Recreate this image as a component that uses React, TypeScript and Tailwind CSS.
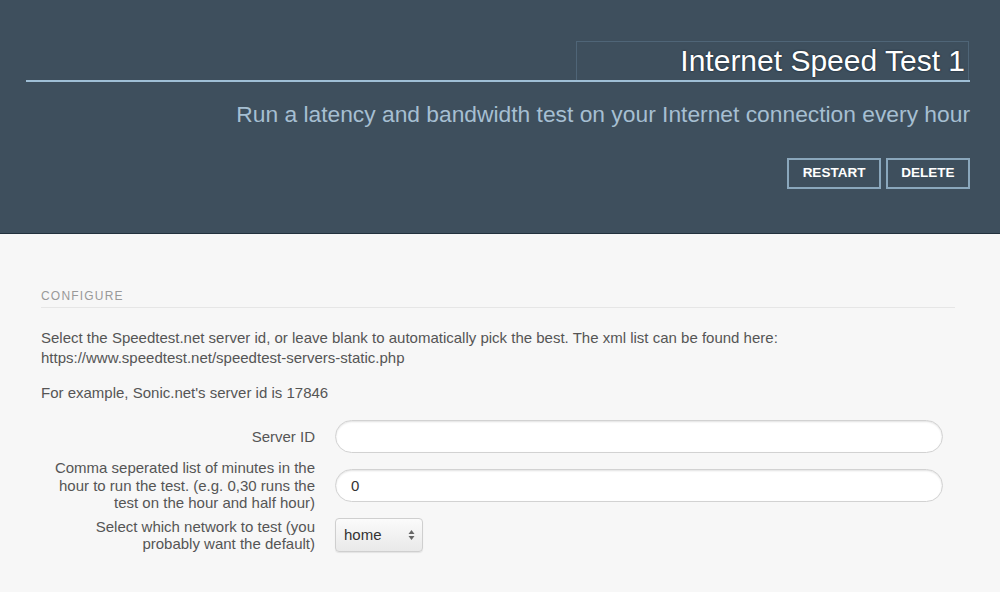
import React from 'react';

function FormRow({ label, children }: { label: React.ReactNode; children: React.ReactNode }) {
  return (
    <div className="flex items-center">
      <label className="w-[274px] shrink-0 text-right text-[15px] leading-[17.5px] text-[#555]">{label}</label>
      <div className="ml-[20px] flex-1">{children}</div>
    </div>
  );
}

const inputCls =
  'h-[33px] w-full rounded-full border border-[#d2d2d2] bg-white px-[15px] text-[15px] text-[#333] shadow-[inset_0_1px_2px_rgba(0,0,0,0.12)] outline-none';

export default function App() {
  return (
    <div className="min-h-[592px] bg-[#f7f7f7] font-['Liberation_Sans',Arial,sans-serif]">
      <header className="h-[234px] border-b border-[#22313d] bg-[#3e4f5d] pl-[26px] pr-[30px] pt-[41px]">
        <div className="flex justify-end border-b-[2px] border-[#9fbfd6]">
          <h1 className="mr-[1px] w-[393px] border border-b-0 border-[#4f6577] pr-[3px] text-right text-[30px] leading-[38px] text-white [text-shadow:0_0_2px_#0c1a26]">
            Internet Speed Test 1
          </h1>
        </div>
        <p className="mt-[18px] text-right text-[22.8px] leading-[28px] text-[#a6bfd2]">
          Run a latency and bandwidth test on your Internet connection every hour
        </p>
        <div className="mt-[30px] flex justify-end gap-[5px]">
          <button className="h-[31px] w-[94px] border-[2px] border-[#8aa7bc] text-[13.5px] font-bold text-white">RESTART</button>
          <button className="h-[31px] w-[84px] border-[2px] border-[#8aa7bc] text-[13.5px] font-bold text-white">DELETE</button>
        </div>
      </header>

      <main className="pl-[41px] pr-[45px] pt-[53px]">
        <h2 className="border-b border-[#e6e6e6] pb-[2px] text-[12px] tracking-[1.2px] text-[#999]">CONFIGURE</h2>
        <p className="mt-[20px] text-[15px] leading-[20px] text-[#555]">
          Select the Speedtest.net server id, or leave blank to automatically pick the best. The xml list can be found here:
          <br />
          https://www.speedtest.net/speedtest-servers-static.php
        </p>
        <p className="mt-[15px] text-[15px] leading-[20px] text-[#555]">For example, Sonic.net's server id is 17846</p>

        <div className="mt-[17px] mr-[12px] flex flex-col gap-[6px]">
          <FormRow label="Server ID">
            <input className={inputCls} />
          </FormRow>
          <FormRow
            label={
              <>
                Comma seperated list of minutes in the
                <br />
                hour to run the test. (e.g. 0,30 runs the
                <br />
                test on the hour and half hour)
              </>
            }
          >
            <input defaultValue="0" className={inputCls} />
          </FormRow>
          <FormRow
            label={
              <>
                Select which network to test (you
                <br />
                probably want the default)
              </>
            }
          >
            <div className="relative flex h-[34px] w-[88px] items-center rounded-[4px] border border-[#cfcfcf] bg-gradient-to-b from-[#fbfbfb] to-[#e9e9e9] px-[8px] text-[15px] text-[#333] shadow-[0_1px_1px_rgba(0,0,0,0.08)]">
              home
              <svg className="absolute right-[7px] top-[10px]" width="7" height="12" viewBox="0 0 7 12">
                <path d="M3.5 1 L6.5 5 H0.5 Z" fill="#666" />
                <path d="M3.5 11 L6.5 7 H0.5 Z" fill="#666" />
              </svg>
            </div>
          </FormRow>
        </div>
      </main>
    </div>
  );
}
